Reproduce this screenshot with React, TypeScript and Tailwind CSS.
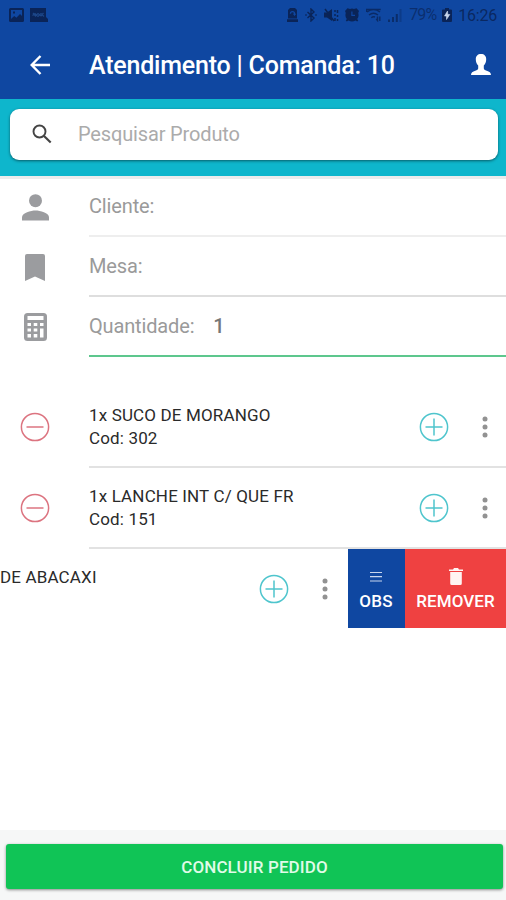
import type { ReactNode } from "react";

function StatusBar() {
  return (
    <div className="flex h-[30px] shrink-0 items-center pl-[9px] pr-[9px] text-[#0a2458]">
      <svg width="15" height="14" viewBox="0 0 15 14" className="shrink-0">
        <path
          fill="currentColor"
          fillRule="evenodd"
          d="M1.500 0h12A1.500 1.500 0 0 1 15 1.500v11A1.500 1.500 0 0 1 13.500 14h-12A1.500 1.500 0 0 1 0 12.500v-11A1.500 1.500 0 0 1 1.500 0zM2 2v9l3.200-3 2.200 1.800L11 6l2 2V2zm2 1.500h2v2H4z"
        />
      </svg>
      <svg width="18" height="14" viewBox="0 0 18 14" className="ml-[6px] shrink-0">
        <path fill="currentColor" d="M0 0h16v9l2 2v3H0z" />
        <path
          d="M2.500 7.500 5 5.500l3 3 3-3 3 3M3 5l2.500 3L8 5.500 11 8l2.500-3"
          fill="none"
          stroke="#1c4688"
          strokeWidth="1.200"
        />
      </svg>
      <div className="ml-auto flex items-center">
        <svg width="11" height="14" viewBox="0 0 11 14">
          <path
            fill="currentColor"
            fillRule="evenodd"
            d="M3 0h5l2 2v8.500H1V2zM5.500 3A2.700 2.700 0 0 0 2.800 5.700h1.300a1.400 1.400 0 0 1 2.800 0h-1L7.500 8l1.700-2.300h-1A2.700 2.700 0 0 0 5.500 3zM0 11.200h11V14H0z"
          />
        </svg>
        <svg width="12" height="14" viewBox="0 0 12 14" className="ml-[7px]" fill="none" stroke="currentColor" strokeWidth="1.400">
          <path d="M2.500 4 9 10l-3 3V1l3 3-6.500 6M.3 7h1.400M10.300 7h1.400" />
        </svg>
        <svg width="15" height="14" viewBox="0 0 15 14" className="ml-[7px]">
          <path fill="currentColor" d="M0 4.500h3L8 1v12L3 9.500H0z" />
          <path d="M1 1l9 12M11 2v2M11 6v2M11 10v3M13.500 2v3M13.500 7v2M13.500 11v2" stroke="currentColor" strokeWidth="1.500" />
        </svg>
        <svg width="14" height="14" viewBox="0 0 14 14" className="ml-[6px]">
          <path
            fill="currentColor"
            fillRule="evenodd"
            d="M2.500.3 5 .9a7 7 0 0 1 4 0l2.500-.6L14 3l-.8 2a6.500 6.500 0 0 1-1 6l1 1.500-1 1-1.700-1a6.500 6.500 0 0 1-7 0l-1.700 1-1-1 1-1.500a6.500 6.500 0 0 1-1-6L0 3zM6.300 3.500V8H10V6.800H7.500V3.500z"
          />
        </svg>
        <svg width="16" height="14" viewBox="0 0 16 14" className="ml-[7px] opacity-80" fill="none" stroke="currentColor" strokeWidth="1.400">
          <path d="M.7 4V1.500h14M1 4a11 11 0 0 1 13 0M3 7a7.500 7.500 0 0 1 9 0M5.300 9.700a4 4 0 0 1 3.700-.7M11.500 8.500v4l-1.300-1.500M13.800 13V8.500" />
        </svg>
        <svg width="14" height="14" viewBox="0 0 14 14" className="ml-[6px]">
          <path fill="currentColor" opacity=".75" d="M0 11.500h2V14H0zM4 9h2v5H4zM7.800 6h2v8h-2z" />
          <path fill="currentColor" opacity=".35" d="M11.500 1h2v13h-2z" />
        </svg>
        <span className="ml-[7px] w-[33px] text-[16px] leading-none tracking-[-0.800px] text-[#0a2458]/70">79%</span>
        <svg width="10" height="14" viewBox="0 0 10 14">
          <path fill="currentColor" d="M3 0h4v1.500h2a1 1 0 0 1 1 1V13a1 1 0 0 1-1 1H1a1 1 0 0 1-1-1V2.500a1 1 0 0 1 1-1h2z" />
          <path fill="#c9d8ee" stroke="#c9d8ee" strokeWidth=".6" d="M5.500 3 2.500 8h2v3.500L7.800 6.500h-2z" />
        </svg>
        <span className="ml-[6px] pt-px text-[16px] leading-none tracking-[-0.200px] text-[#0a2458]/90">16:26</span>
      </div>
    </div>
  );
}

function Header() {
  return (
    <header className="flex h-[69px] shrink-0 items-center pl-[30px] pr-[15px] text-white">
      <svg width="20" height="20" viewBox="0 0 20 20" fill="none" stroke="currentColor" strokeWidth="2.400" className="shrink-0">
        <path d="M20 10H2M10.500 1 1.700 10l8.800 9" />
      </svg>
      <h1 className="ml-[39px] flex-1 whitespace-nowrap pt-[2px] text-[25px] font-medium leading-[30px] tracking-[-0.200px]">
        Atendimento | Comanda: 10
      </h1>
      <svg width="20" height="21" viewBox="0 0 20 21" fill="currentColor" className="shrink-0">
        <path d="M10 0c3.300 0 5.200 2 5.200 5.300 0 2.400-.8 4.700-2.400 6.200v2.700c0 1.300 1 1.800 2.900 2.500 2.700 1 4.300 1.800 4.300 4.300H0c0-2.500 1.600-3.300 4.300-4.300 1.900-.7 2.900-1.200 2.900-2.500v-2.700C5.600 10 4.800 7.700 4.800 5.300 4.800 2 6.700 0 10 0z" />
      </svg>
    </header>
  );
}

function FieldRow({ icon, label, value, line }: { icon: ReactNode; label: string; value?: string; line: string }) {
  return (
    <div className="flex h-[60px] items-stretch">
      <div className="flex w-[89px] shrink-0 items-center pl-[20px] text-[#9b9c9f]">
        <div className="flex w-[30px] justify-center">{icon}</div>
      </div>
      <div className={"flex flex-1 items-center text-[20px] tracking-[-0.150px] text-[#9a9a9a] " + line}>
        <span>{label}</span>
        {value && <span className="ml-[19px] font-medium text-[#777]">{value}</span>}
      </div>
    </div>
  );
}

function PlusIcon() {
  return (
    <svg width="30" height="30" viewBox="0 0 30 30" fill="none" stroke="#4fc5cd" strokeWidth="1.500" className="shrink-0">
      <circle cx="15" cy="15" r="13.600" />
      <path d="M6.500 15h17M15 6.500v17" />
    </svg>
  );
}

function MinusIcon() {
  return (
    <svg width="30" height="30" viewBox="0 0 30 30" fill="none" stroke="#dc7480" strokeWidth="1.500" className="shrink-0">
      <circle cx="15" cy="15" r="13.600" />
      <path d="M6.500 15h17" />
    </svg>
  );
}

function Dots() {
  return (
    <svg width="6" height="22" viewBox="0 0 6 22" fill="#929292" className="shrink-0">
      <circle cx="3" cy="3" r="2.500" />
      <circle cx="3" cy="11" r="2.500" />
      <circle cx="3" cy="19" r="2.500" />
    </svg>
  );
}

function ItemRow({ name, code }: { name: string; code: string }) {
  return (
    <div className="flex h-[81px] items-stretch">
      <div className="flex w-[89px] shrink-0 items-center pb-[2px] pl-[20px]">
        <MinusIcon />
      </div>
      <div className="flex flex-1 items-center border-b-2 border-[#e2e2e2] pr-[18px]">
        <div className="flex-1 whitespace-nowrap text-[17px] leading-[22.500px] tracking-[0.150px] text-[#2a2a2a]">
          <p>{name}</p>
          <p>{code}</p>
        </div>
        <PlusIcon />
        <div className="ml-[33px]">
          <Dots />
        </div>
      </div>
    </div>
  );
}

export default function App() {
  return (
    <div className="flex h-[900px] w-[506px] flex-col overflow-hidden bg-white font-[Roboto,sans-serif]">
      <div className="flex h-[99px] shrink-0 flex-col bg-[#0f47a1]">
        <StatusBar />
        <Header />
      </div>

      <div className="h-[77px] shrink-0 bg-[#0eb6cc] pl-[10px] pr-[8px] pt-[10px]">
        <div className="flex h-[51px] items-center rounded-[9px] bg-white pb-[2px] pl-[22px] shadow-[0_1px_3px_rgba(0,0,0,0.5)]">
          <svg width="20" height="20" viewBox="0 0 20 20" fill="none" stroke="#444" className="shrink-0">
            <circle cx="7.500" cy="7.500" r="6" strokeWidth="1.900" />
            <path d="m12 12 6.700 6.500" strokeWidth="2.200" />
          </svg>
          <span className="ml-[26px] text-[20px] tracking-[-0.150px] text-[#ababab]">Pesquisar Produto</span>
        </div>
      </div>

      <div className="h-[181px] shrink-0 border-t-[3px] border-[#ececec]">
        <div className="-mt-[2px]">
          <FieldRow
            label="Cliente:"
            line="border-b-2 border-[#eeeeee]"
            icon={
              <svg width="27" height="27" viewBox="0 0 27 27" fill="currentColor">
                <circle cx="13.500" cy="6.700" r="6.500" />
                <path d="M0 26.500v-3.200c0-4.500 9-6.800 13.500-6.800S27 18.800 27 23.300v3.200z" />
              </svg>
            }
          />
          <FieldRow
            label="Mesa:"
            line="border-b-2 border-[#dedede]"
            icon={
              <svg width="20" height="27" viewBox="0 0 20 27" fill="currentColor">
                <path d="M2 0h16a2 2 0 0 1 2 2v25l-10-4.500L0 27V2a2 2 0 0 1 2-2z" />
              </svg>
            }
          />
          <FieldRow
            label="Quantidade:"
            value="1"
            line="border-b-2 border-[#5dc78d]"
            icon={
              <svg width="23" height="28" viewBox="0 0 23 28">
                <rect width="23" height="28" rx="3.500" fill="currentColor" />
                <path
                  fill="#fff"
                  d="M3.500 3h16v4h-16zM3.500 10H7v3H3.500zM9.700 10h3.600v3H9.700zM16 10h3.500v3H16zM3.500 15.500H7v3H3.500zM9.700 15.500h3.600v3H9.700zM3.500 21H7v3.500H3.500zM9.700 21h3.600v3.500H9.700zM16 15.500h3.500v9H16z"
                />
              </svg>
            }
          />
        </div>
      </div>

      <div className="flex-1 pt-[30px]">
        <ItemRow name="1x SUCO DE MORANGO" code="Cod: 302" />
        <ItemRow name="1x LANCHE INT C/ QUE FR" code="Cod: 151" />
        <div className="flex h-[79px]">
          <div className="flex flex-1 items-center pr-[20px]">
            <div className="flex-1 whitespace-nowrap text-[17px] leading-[22.500px] tracking-[0.150px] text-[#2a2a2a]">
              <p>DE ABACAXI</p>
              <p>&nbsp;</p>
            </div>
            <PlusIcon />
            <div className="ml-[33px]">
              <Dots />
            </div>
          </div>
          <button className="flex w-[57px] flex-col items-center bg-[#0f47a1] pr-px pt-[19px] text-[17px] font-medium text-white">
            <svg width="12" height="17" viewBox="0 0 12 17" stroke="#c8d6ee" strokeWidth="1.200">
              <path d="M0 4.500h12M0 8.700h12M0 13h12" />
            </svg>
            <span className="mt-[4px] leading-[24px] tracking-[0.200px]">OBS</span>
          </button>
          <button className="flex w-[101px] flex-col items-center bg-[#ef4141] pt-[19px] text-[17px] font-medium text-white">
            <svg width="14" height="17" viewBox="0 0 14 17" fill="#fff4f2">
              <path d="M0 1.500h4L5 0h4l1 1.500h4V3H0zM1.200 4h11.600v11.500a1.500 1.500 0 0 1-1.500 1.500H2.700a1.500 1.500 0 0 1-1.500-1.500z" />
            </svg>
            <span className="mt-[4px] leading-[24px] tracking-[0.100px]">REMOVER</span>
          </button>
        </div>
      </div>

      <footer className="h-[70px] shrink-0 bg-[#f6f7f7] pl-[6px] pr-[3px] pt-[14px]">
        <button className="flex h-[45px] w-full items-center justify-center rounded-[3px] bg-[#10c456] pt-[2px] text-[17px] font-medium tracking-[0.120px] text-[#e0fbe8] shadow-[0_1px_3px_rgba(0,0,0,0.450)]">
          CONCLUIR PEDIDO
        </button>
      </footer>
    </div>
  );
}
